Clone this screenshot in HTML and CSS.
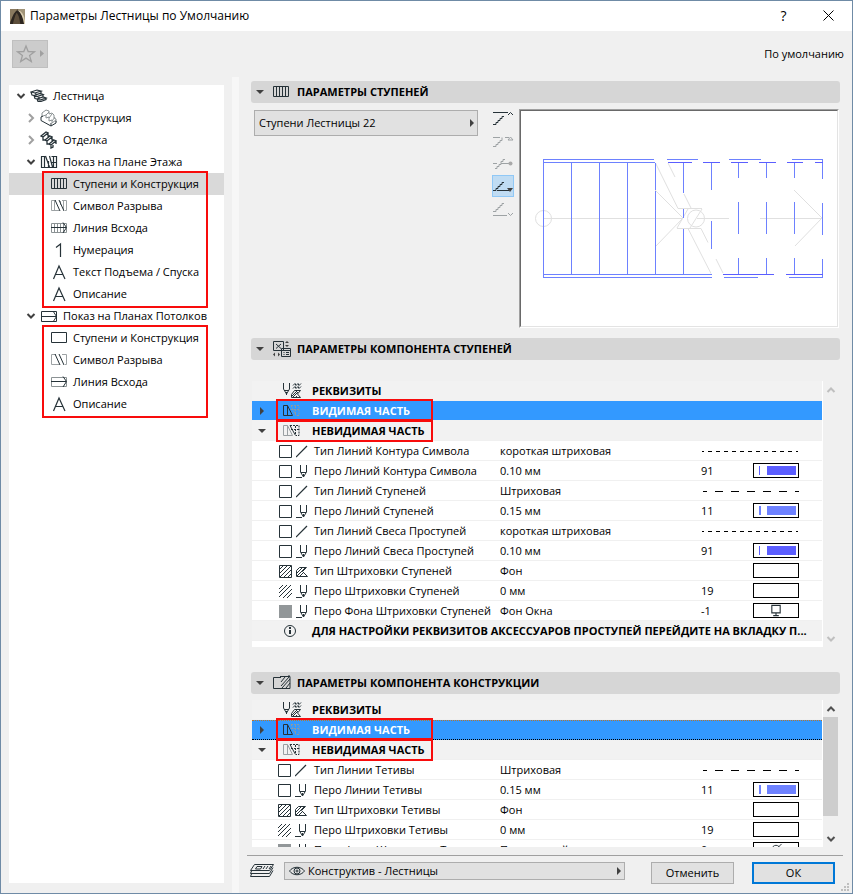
FILE: index.html
```html
<!DOCTYPE html>
<html lang="ru">
<head>
    <meta charset="UTF-8">
    <meta name="viewport" content="width=device-width, initial-scale=1.0">
    <title>Параметры Лестницы по Умолчанию</title>
    <link rel="stylesheet" href="styles.css">
</head>
<body>
    <!-- Icon set -->
    <svg class="sprite" aria-hidden="true">
        <symbol id="i-down" viewBox="0 0 10 10"><path d="M1.500 3L5 6.500 8.500 3" stroke-width="2"/></symbol>
        <symbol id="i-right" viewBox="0 0 10 10"><path d="M3 1l4 4-4 4" stroke-width="2"/></symbol>
        <symbol id="i-tri-down" viewBox="0 0 10 10"><path d="M1 3h8L5 7z" class="fill"/></symbol>
        <symbol id="i-tri-right" viewBox="0 0 10 10"><path d="M3 1v8l4-4z" class="fill"/></symbol>
        <symbol id="i-stair" viewBox="0 0 18 18">
            <path d="M1 5l6-2 4 1-6 2zM4 8.500l6-2 3 1-6 2zM7 12l6-2 3 1-6 2zM1 5l1 3 2 .5 1 3 2 .5 1 2.500h3l5-2V11M5 6l2 2M11 4v2.500M8 9.500l2 2M13 7.500V10" stroke-width="1.200"/>
        </symbol>
        <symbol id="i-structure" viewBox="0 0 18 18">
            <path d="M2 4l4-3 3 1v3l3-1 2 2v3l2 1v3M3 7l3-1v3l3-1v4l3-1v3l4-3M6 6l3-3M9 9l3-4M12 12l3-4M2 4v4" stroke="#8b9294"/>
            <path d="M1 8v3.500l10 5.500 5-3v-2M1 8l2-1M11 17v-3"/>
        </symbol>
        <symbol id="i-finish" viewBox="0 0 18 18">
            <path d="M1 5l5-4 2 1-5 4zM5 9l5-4 2 1-5 4zM9 13l5-4 2 1-5 4zM3 6v3l2 0M7 10v3l2 0M11 14v3l2-1v-2M8 2v3l2 0M12 6v3l2 0M16 10v3" stroke-width="1.300"/>
        </symbol>
        <symbol id="i-floor" viewBox="0 0 18 18">
            <path d="M1.500 3.500v11h15v-11h-5M1 3.500h4M4.500 3v11M8.500 8v6M13.500 3v11M5.500 3l4 11M9.500 3l3 11M11 9.500h5" stroke-width="1.200"/>
        </symbol>
        <symbol id="i-treads" viewBox="0 0 16 16"><path d="M.5 2.500h15v10H.5zM3.500 3v9M6.500 3v9M9.500 3v9M12.500 3v9"/></symbol>
        <symbol id="i-break" viewBox="0 0 16 16"><path d="M5 2.500H.5v10h8M3.500 3v9M12.500 3v9M11 2.500h4.500v10H14M9.500 3v4" stroke="#9da2a4"/><path d="M4 2l5 11M8 2l5 11"/></symbol>
        <symbol id="i-walk" viewBox="0 0 16 16"><path d="M.5 3.500h15v9H.5zM3.500 4v8M6.500 4v8M9.500 4v8M12.500 4v8" stroke="#8b9294"/><path d="M0 7.500h15M12 2.500l3.500 5L12 13"/></symbol>
        <symbol id="i-one" viewBox="0 0 16 16"><path d="M5 5.500l4.500-3.500v13" stroke-width="1.200"/></symbol>
        <symbol id="i-letter" viewBox="0 0 16 16"><path d="M2.500 15L8 2l6 13M4.500 10.500h7.500" stroke-width="1.200"/></symbol>
        <symbol id="i-ceiling" viewBox="0 0 18 18"><path d="M1.500 4.500h15v10h-15zM1 9.500h15M13 4l3.500 5.500L13 15"/></symbol>
        <symbol id="i-box" viewBox="0 0 16 16"><path d="M.5 2.500h15v10H.5z"/></symbol>
        <symbol id="i-break-box" viewBox="0 0 16 16"><path d="M5 2.500H.5v10h8M11 2.500h4.500v10H14" stroke="#9da2a4"/><path d="M4 2l5 11M8 2l5 11"/></symbol>
        <symbol id="i-walk-box" viewBox="0 0 16 16"><path d="M.5 3.500h15v9H.5z" stroke="#8b9294"/><path d="M0 7.500h15M12 2.500l3.500 5L12 13"/></symbol>
        <symbol id="i-component" viewBox="0 0 18 18">
            <path d="M.5 1.500h10v9H.5zM3 4l5 4.500M8 4L3 8.500M8.500 8.500h9v8h-9z"/>
            <path d="M9 10.500h8M10.500 12.500h1M13 12.500h3M10.500 14.500h1M13 14.500h3"/>
            <path d="M12 3l2-2 2 2zM12 5l2 2 2-2zM2 12.500v4L0 14.500zM5 12.500v4l2-2z" class="fill"/>
        </symbol>
        <symbol id="i-construct" viewBox="0 0 18 18">
            <path d="M8 3.500H.5v11H8M7 2.500h10v12H8M8 8l4-5M8 12l8-9M9 14l8-9M13 14l4-5M16 3v-2"/>
        </symbol>
        <symbol id="i-attributes" viewBox="0 0 20 16">
            <path d="M1.500 0v6L4.500 11l3-5V0M2 7.500h5M4.500 9v3M11 2.500l2-2 1 2 2-2 1 2 2-2M11 5.500l2-2 1 2 2-2 1 2 2-2"/>
            <path d="M9.500 14.500v-3l3-4h6l-3 3.500 3 3.500zM10 13l5-5M11 14l5-5M14 14l1-1"/>
        </symbol>
        <symbol id="i-visible" viewBox="0 0 20 16"><path d="M1.500 2.500v10h9L5.500 2.500zM5.500 2.500v10"/><path d="M9 2.500h8v10h-3L9 2.500M13.500 3v9M9 6.500h8" stroke="#8b9aa6" stroke-dasharray="2 1"/></symbol>
        <symbol id="i-hidden" viewBox="0 0 20 16"><path d="M1.500 2.500v10h9L5.500 2.500zM5.500 2.500v10" stroke="#9aa0a3"/><path d="M8 2.500l5.500 10"/><path d="M8 2.500h9v10h-3M13.500 3v9M9 6.500h8" stroke-dasharray="2 1"/></symbol>
        <symbol id="i-square" viewBox="0 0 14 14"><path d="M.5.5h12v12H.5z"/></symbol>
        <symbol id="i-hatch-box" viewBox="0 0 14 14"><path d="M.5.5h12v12H.5zM1 4l3-3M1 8l7-7M1 12L12 1M5 12l7-7M9 12l3-3"/></symbol>
        <symbol id="i-hatch" viewBox="0 0 14 14"><path d="M0 4l4-4M0 8l8-8M0 12L12 0M4 13l9-9M8 13l5-5"/></symbol>
        <symbol id="i-solid" viewBox="0 0 14 14"><path d="M0 0h13v13H0z" class="solid"/></symbol>
        <symbol id="i-line" viewBox="0 0 12 14"><path d="M0 12L11 1" stroke-width="1.200"/></symbol>
        <symbol id="i-pen" viewBox="0 0 12 14"><path d="M4.500 0v7l3 5 3-5V0M5 7.500h5M0 12.500h6M7.500 9v3"/></symbol>
        <symbol id="i-fill" viewBox="0 0 12 14"><path d="M.5 11.500v-6l3-3h7l-4 4 5 5zM1 8l5-5M1 11l8-8M4 11l3-3"/></symbol>
        <symbol id="i-screen" viewBox="0 0 14 14"><path d="M2.500 1.500h9v8h-9zM7 10v2M4 12.500h6" stroke-width="1.200"/></symbol>
        <symbol id="i-none" viewBox="0 0 14 14"><circle cx="7" cy="7" r="4.500"/><path d="M2 12L13 1"/></symbol>
        <symbol id="i-info" viewBox="0 0 20 16"><circle cx="8" cy="8" r="5.500"/><path d="M8 7v4M8 4v2" stroke-width="2"/></symbol>
        <symbol id="i-eye" viewBox="0 0 16 12"><path d="M.5 6C4 1 12 1 15.500 6 12 11 4 11 .5 6z"/><circle cx="8" cy="6" r="3"/><circle cx="8" cy="6" r="1"/></symbol>
        <symbol id="i-layers" viewBox="0 0 26 16">
            <path d="M5.500 1.500h19l-4 6H1.500zM24 4.500l-3.500 6H1.500l1-2.500M24 7.500l-3.500 6H1.500l1-2.500M8 3.500h5l-1.500 2.500H6.500zM14 6l2-3M17 6l2-3M20 6l2-3"/>
        </symbol>
    </svg>

    <header class="titlebar">
        <svg class="app-icon" viewBox="0 0 16 16">
            <path d="M0 0h16v16H0z" fill="#5d4e3b"/>
            <path d="M0 0h8L3 8 0 14z" fill="#8a7a5f"/>
            <path d="M0 16C3 6 5 2 9 1c3 2 5 8 6 15h-4C10 9 9 6 7 4 5 8 4 12 3 16z" fill="#2d2620"/>
            <path d="M8 0h8v12C14 7 12 3 8 0z" fill="#a09378"/>
            <path d="M8 1c5 1 7 6 8 11v4h-1C14 9 12 4 8 1z" fill="#d9cdb0"/>
        </svg>
        <h1>Параметры Лестницы по Умолчанию</h1>
        <button class="title-btn" aria-label="Справка">?</button>
        <button class="title-btn" aria-label="Закрыть">
            <svg width="11" height="11" viewBox="0 0 11 11"><path d="M.5.5l10 10M10.500.5l-10 10" stroke="#000"/></svg>
        </button>
    </header>

    <div class="toolbar">
        <button class="favorite" aria-label="Избранное" disabled>
            <svg width="30" height="20" viewBox="0 0 30 20">
                <path d="M10 2l2.200 5.500 6.300.3-4.900 3.800 1.700 5.900-5.300-3.400-5.300 3.400 1.700-5.900L1.500 7.800l6.300-.3z" stroke="#a0a0a0" stroke-width="1.300"/>
                <path d="M24 6v7l4-3.500z" fill="#a0a0a0"/>
            </svg>
        </button>
        <span>По умолчанию</span>
    </div>

    <div class="main">
        <nav class="tree">
            <a href="#" class="node"><svg class="chev"><use href="#i-down"/></svg><svg class="big"><use href="#i-stair"/></svg>Лестница</a>
            <a href="#" class="node child"><svg class="chev closed"><use href="#i-right"/></svg><svg class="big"><use href="#i-structure"/></svg>Конструкция</a>
            <a href="#" class="node child"><svg class="chev closed"><use href="#i-right"/></svg><svg class="big"><use href="#i-finish"/></svg>Отделка</a>
            <a href="#" class="node child"><svg class="chev"><use href="#i-down"/></svg><svg class="big"><use href="#i-floor"/></svg>Показ на Плане Этажа</a>
            <div class="branch">
                <a href="#" class="node leaf selected"><svg><use href="#i-treads"/></svg>Ступени и Конструкция</a>
                <a href="#" class="node leaf"><svg><use href="#i-break"/></svg>Символ Разрыва</a>
                <a href="#" class="node leaf"><svg><use href="#i-walk"/></svg>Линия Всхода</a>
                <a href="#" class="node leaf"><svg><use href="#i-one"/></svg>Нумерация</a>
                <a href="#" class="node leaf"><svg><use href="#i-letter"/></svg>Текст Подъема / Спуска</a>
                <a href="#" class="node leaf"><svg><use href="#i-letter"/></svg>Описание</a>
            </div>
            <a href="#" class="node child"><svg class="chev"><use href="#i-down"/></svg><svg class="big"><use href="#i-ceiling"/></svg>Показ на Планах Потолков</a>
            <div class="branch">
                <a href="#" class="node leaf"><svg><use href="#i-box"/></svg>Ступени и Конструкция</a>
                <a href="#" class="node leaf"><svg><use href="#i-break-box"/></svg>Символ Разрыва</a>
                <a href="#" class="node leaf"><svg><use href="#i-walk-box"/></svg>Линия Всхода</a>
                <a href="#" class="node leaf"><svg><use href="#i-letter"/></svg>Описание</a>
            </div>
        </nav>
        <div class="splitter"></div>

        <div class="content">
            <section class="treads">
                <h2><svg class="tri"><use href="#i-tri-down"/></svg><svg class="h-icon small"><use href="#i-treads"/></svg>ПАРАМЕТРЫ СТУПЕНЕЙ</h2>
                <div class="treads-body">
                    <button class="popup">Ступени Лестницы 22<svg class="tri"><use href="#i-tri-right"/></svg></button>
                    <div class="levels">
                        <button aria-label="Показ выше"><svg viewBox="0 0 22 20"><path d="M1 2.500h15M1 14.500h3v-2h2v-2h2v-2h2v-2h2M16 5l2.500-2.500L21 5"/></svg></button>
                        <button class="off" aria-label="На этаж выше"><svg viewBox="0 0 22 20"><path d="M1 5.500h7M13 5.500h4M1 14.500h3v-2h2v-2h2v-2h2v-3M16 8l2.500-3L21 8z"/></svg></button>
                        <button class="off" aria-label="Собственный этаж"><svg viewBox="0 0 22 20"><path d="M1 9.500h4M9 9.500h8M3 14.500h2v-2h2v-2h2v-3h2v-2h2"/><circle cx="18.500" cy="9.500" r="2" class="fill"/></svg></button>
                        <button class="on" aria-label="На этаж ниже"><svg viewBox="0 0 22 20"><path d="M1 14.500h3v-2h2v-2h2v-2h2v-2h2M5 14.500h12"/><path d="M15 12h6l-3 4z" class="fill"/></svg></button>
                        <button class="off" aria-label="Показ ниже"><svg viewBox="0 0 22 20"><path d="M1 13.500h3v-2h2v-2h2v-2h2v-2h2M1 17.500h14M16 15l2.500 2.500L21 15"/></svg></button>
                    </div>
                    <div class="preview">
                        <svg viewBox="521 111 316 215">
                            <g stroke="#e0e0e0">
                                <circle cx="543.500" cy="218.500" r="8"/>
                                <circle cx="696" cy="218.500" r="8.500"/>
                                <path d="M543 218.500h140M697 218.500h32M760 218.500h62"/>
                                <path d="M655 190l28 28-27 28M794 190l28 28-27 28"/>
                                <path d="M655.500 163l22.500 45.500h24M668 163l7 14M684 194l7 14M677 228.500h24l7 14M688 228.500l23 45M716 259l7 14M677 228l11-19M690 228l12-19"/>
                            </g>
                            <g stroke="#6d81ff">
                                <path d="M543.500 159v119M543 159.500h111M543 162.500h112M571.500 163v111M599.500 163v111M627.500 163v111M655.500 163v27M655.500 191v83"/>
                                <path d="M683.500 163v30M683.500 209v9M683.500 229v45M711.500 163v27M711.500 221v28"/>
                                <path d="M738.500 163v15M738.500 202v32M738.500 258v16M766.500 163v15M766.500 202v32M766.500 258v16M794.500 163v15M794.500 202v32M794.500 258v16M822.500 159v20M822.500 203v32M822.500 259v19"/>
                                <path d="M667 159.500h31M729 159.500h32M792 159.500h31M543 274.500h169M543 277.500h169M724 277.500h34M789 277.500h34"/>
                            </g>
                            <path stroke="#5b5eff" d="M668 162.500h24M703 162.500h17M731 162.500h17M759 162.500h17M787 162.500h16M815 162.500h8M723 274.500h51M786 274.500h37"/>
                        </svg>
                    </div>
                </div>
            </section>

            <section class="component">
                <h2><svg class="tri"><use href="#i-tri-down"/></svg><svg class="h-icon"><use href="#i-component"/></svg>ПАРАМЕТРЫ КОМПОНЕНТА СТУПЕНЕЙ</h2>
                <div class="list">
                    <div class="rows">
                        <table>
                            <colgroup><col class="c-arrow"><col class="c-icons"><col class="c-name"><col><col class="c-num"><col class="c-swatch"></colgroup>
                            <tr class="group"><td></td><td colspan="5"><span class="label"><svg><use href="#i-attributes"/></svg>РЕКВИЗИТЫ</span></td></tr>
                            <tr class="group current"><td><svg class="tri"><use href="#i-tri-right"/></svg></td><td colspan="5"><span class="label marked"><svg><use href="#i-visible"/></svg>ВИДИМАЯ ЧАСТЬ</span></td></tr>
                            <tr class="group"><td><svg class="tri"><use href="#i-tri-down"/></svg></td><td colspan="5"><span class="label marked"><svg><use href="#i-hidden"/></svg>НЕВИДИМАЯ ЧАСТЬ</span></td></tr>
                            <tr><td></td><td><svg class="a"><use href="#i-square"/></svg><svg class="b"><use href="#i-line"/></svg></td><td>Тип Линий Контура Символа</td><td>короткая штриховая</td><td colspan="2"><svg class="dash"><path d="M1 8.500h96" class="short"/></svg></td></tr>
                            <tr><td></td><td><svg class="a"><use href="#i-square"/></svg><svg class="b"><use href="#i-pen"/></svg></td><td>Перо Линий Контура Символа</td><td>0.10 мм</td><td>91</td><td><button class="swatch pen91" aria-label="Перо 91"></button></td></tr>
                            <tr><td></td><td><svg class="a"><use href="#i-square"/></svg><svg class="b"><use href="#i-line"/></svg></td><td>Тип Линий Ступеней</td><td>Штриховая</td><td colspan="2"><svg class="dash"><path d="M2 8.500h96" class="long"/></svg></td></tr>
                            <tr><td></td><td><svg class="a"><use href="#i-square"/></svg><svg class="b"><use href="#i-pen"/></svg></td><td>Перо Линий Ступеней</td><td>0.15 мм</td><td>11</td><td><button class="swatch pen11" aria-label="Перо 11"></button></td></tr>
                            <tr><td></td><td><svg class="a"><use href="#i-square"/></svg><svg class="b"><use href="#i-line"/></svg></td><td>Тип Линий Свеса Проступей</td><td>короткая штриховая</td><td colspan="2"><svg class="dash"><path d="M1 8.500h96" class="short"/></svg></td></tr>
                            <tr><td></td><td><svg class="a"><use href="#i-square"/></svg><svg class="b"><use href="#i-pen"/></svg></td><td>Перо Линий Свеса Проступей</td><td>0.10 мм</td><td>91</td><td><button class="swatch pen91" aria-label="Перо 91"></button></td></tr>
                            <tr><td></td><td><svg class="a"><use href="#i-hatch-box"/></svg><svg class="b"><use href="#i-fill"/></svg></td><td>Тип Штриховки Ступеней</td><td>Фон</td><td></td><td><button class="swatch" aria-label="Штриховка"></button></td></tr>
                            <tr><td></td><td><svg class="a"><use href="#i-hatch"/></svg><svg class="b"><use href="#i-pen"/></svg></td><td>Перо Штриховки Ступеней</td><td>0 мм</td><td>19</td><td><button class="swatch" aria-label="Перо 19"></button></td></tr>
                            <tr><td></td><td><svg class="a"><use href="#i-solid"/></svg><svg class="b"><use href="#i-pen"/></svg></td><td>Перо Фона Штриховки Ступеней</td><td>Фон Окна</td><td>-1</td><td><button class="swatch" aria-label="Перо фона"><svg><use href="#i-screen"/></svg></button></td></tr>
                            <tr class="group"><td></td><td colspan="5"><span class="label"><svg><use href="#i-info"/></svg>ДЛЯ НАСТРОЙКИ РЕКВИЗИТОВ АКСЕССУАРОВ ПРОСТУПЕЙ ПЕРЕЙДИТЕ НА ВКЛАДКУ П...</span></td></tr>
                        </table>
                    </div>
                    <div class="scroll idle">
                        <button aria-label="Вверх"><svg viewBox="0 0 10 10"><path d="M1.500 7L5 3.500 8.500 7" stroke-width="2"/></svg></button>
                        <button aria-label="Вниз"><svg viewBox="0 0 10 10"><path d="M1.500 3L5 6.500 8.500 3" stroke-width="2"/></svg></button>
                    </div>
                </div>
            </section>

            <section class="structure">
                <h2><svg class="tri"><use href="#i-tri-down"/></svg><svg class="h-icon"><use href="#i-construct"/></svg>ПАРАМЕТРЫ КОМПОНЕНТА КОНСТРУКЦИИ</h2>
                <div class="list">
                    <div class="rows">
                        <table>
                            <colgroup><col class="c-arrow"><col class="c-icons"><col class="c-name"><col><col class="c-num"><col class="c-swatch"></colgroup>
                            <tr class="group"><td></td><td colspan="5"><span class="label"><svg><use href="#i-attributes"/></svg>РЕКВИЗИТЫ</span></td></tr>
                            <tr class="group current focused"><td><svg class="tri"><use href="#i-tri-right"/></svg></td><td colspan="5"><span class="label marked"><svg><use href="#i-visible"/></svg>ВИДИМАЯ ЧАСТЬ</span></td></tr>
                            <tr class="group"><td><svg class="tri"><use href="#i-tri-down"/></svg></td><td colspan="5"><span class="label marked"><svg><use href="#i-hidden"/></svg>НЕВИДИМАЯ ЧАСТЬ</span></td></tr>
                            <tr><td></td><td><svg class="a"><use href="#i-square"/></svg><svg class="b"><use href="#i-line"/></svg></td><td>Тип Линии Тетивы</td><td>Штриховая</td><td colspan="2"><svg class="dash"><path d="M2 8.500h96" class="long"/></svg></td></tr>
                            <tr><td></td><td><svg class="a"><use href="#i-square"/></svg><svg class="b"><use href="#i-pen"/></svg></td><td>Перо Линии Тетивы</td><td>0.15 мм</td><td>11</td><td><button class="swatch pen11" aria-label="Перо 11"></button></td></tr>
                            <tr><td></td><td><svg class="a"><use href="#i-hatch-box"/></svg><svg class="b"><use href="#i-fill"/></svg></td><td>Тип Штриховки Тетивы</td><td>Фон</td><td></td><td><button class="swatch" aria-label="Штриховка"></button></td></tr>
                            <tr><td></td><td><svg class="a"><use href="#i-hatch"/></svg><svg class="b"><use href="#i-pen"/></svg></td><td>Перо Штриховки Тетивы</td><td>0 мм</td><td>19</td><td><button class="swatch" aria-label="Перо 19"></button></td></tr>
                            <tr><td></td><td><svg class="a"><use href="#i-solid"/></svg><svg class="b"><use href="#i-pen"/></svg></td><td>Перо Фона Штриховки Тетивы</td><td>Прозрачный</td><td>0</td><td><button class="swatch" aria-label="Перо фона"><svg><use href="#i-none"/></svg></button></td></tr>
                        </table>
                    </div>
                    <div class="scroll">
                        <button aria-label="Вверх"><svg viewBox="0 0 10 10"><path d="M1.500 7L5 3.500 8.500 7" stroke-width="2"/></svg></button>
                        <div class="thumb"></div>
                        <button aria-label="Вниз"><svg viewBox="0 0 10 10"><path d="M1.500 3L5 6.500 8.500 3" stroke-width="2"/></svg></button>
                    </div>
                </div>
            </section>

            <footer>
                <svg class="layers"><use href="#i-layers"/></svg>
                <button class="popup layer"><svg class="eye"><use href="#i-eye"/></svg>Конструктив - Лестницы<svg class="tri"><use href="#i-tri-right"/></svg></button>
                <button class="btn">Отменить</button>
                <button class="btn primary">ОК</button>
            </footer>
        </div>
    </div>
    <svg class="grip" viewBox="0 0 8 8"><path d="M6 0h2v2H6zM3 3h2v2H3zM6 3h2v2H6zM0 6h2v2H0zM3 6h2v2H3zM6 6h2v2H6z" fill="#bfbfbf"/></svg>
</body>
</html>
```
FILE: styles.css
```css
*,
*::after {
    box-sizing: border-box;
}

body {
    position: relative;
    display: flex;
    flex-direction: column;
    height: 100vh;
    margin: 0;
    border: 1px solid #6f8ba6;
    background: #f0f0f0;
    color: #000;
    font: 11px/16px "Open Sans", "Noto Sans", sans-serif;
}

button {
    padding: 0;
    border: 0;
    background: none;
    color: inherit;
    font: inherit;
}

svg {
    flex: none;
    fill: none;
    stroke: #263238;
}

.sprite {
    display: none;
}

.fill {
    fill: #404040;
    stroke: none;
}

.solid {
    fill: #929799;
    stroke: none;
}

.tri {
    width: 10px;
    height: 10px;
}

/* Title bar */
.titlebar {
    display: flex;
    align-items: center;
    height: 30px;
    padding: 0 1px 0 9px;
    background: #fff;
}

.titlebar h1 {
    flex: 1;
    margin: 0 0 0 5px;
    font-size: 12px;
    font-weight: normal;
}

.app-icon {
    width: 15px;
    height: 15px;
    stroke: none;
}

.title-btn {
    width: 45px;
    height: 30px;
    font-size: 14px;
}

.toolbar {
    display: flex;
    justify-content: space-between;
    align-items: center;
    height: 46px;
    padding: 0 8px 0 11px;
}

.favorite {
    width: 36px;
    height: 28px;
    border: 1px solid #bfbfbf;
    background: #cccccc;
}

.favorite svg {
    display: block;
    margin-left: 3px;
    stroke: none;
}

/* Settings tree */
.main {
    flex: 1;
    display: flex;
    min-height: 0;
}

.tree {
    width: 215px;
    margin: 8px 8px 10px;
    background: #fff;
}

.node {
    display: flex;
    align-items: center;
    height: 22px;
    padding-left: 7px;
    color: #000;
    text-decoration: none;
    white-space: nowrap;
}

.node.child {
    padding-left: 17px;
}

.node.leaf {
    padding-left: 42px;
}

.node.selected {
    background: #d9d9d9;
}

.node svg {
    width: 16px;
    height: 16px;
    margin-right: 6px;
}

.node .chev {
    width: 10px;
    height: 10px;
    margin-right: 4px;
    stroke: #404040;
}

.node .chev.closed {
    stroke: #a0a0a0;
}

.node .big {
    width: 18px;
    height: 18px;
    margin-right: 5px;
}

.branch {
    position: relative;
}

.branch::after {
    content: "";
    position: absolute;
    top: -2px;
    bottom: -3px;
    left: 33px;
    width: 166px;
    border: 2px solid #f80c0c;
}

.splitter {
    width: 7px;
    background: #f7f7f7;
}

/* Panels */
.content {
    flex: 1;
    display: flex;
    flex-direction: column;
    min-width: 0;
    padding: 4px 9px 9px 8px;
}

section {
    margin: 0 3px 0 4px;
}

h2 {
    display: flex;
    align-items: center;
    height: 22px;
    margin: 0;
    padding-left: 4px;
    border-radius: 3px;
    background: #d6d6d6;
    font-size: 11px;
    font-weight: bold;
}

.h-icon {
    width: 18px;
    height: 18px;
    margin: 0 6px 0 8px;
}

.h-icon.small {
    width: 16px;
    height: 16px;
    margin-right: 8px;
}

.treads-body {
    display: flex;
    align-items: flex-start;
    padding: 6px 1px 0 3px;
}

.popup {
    display: flex;
    justify-content: space-between;
    align-items: center;
    width: 224px;
    height: 26px;
    margin: 1px 14px 0 0;
    padding: 0 0 0 4px;
    border: 1px solid #adadad;
    background: #e1e1e1;
}

.levels {
    display: flex;
    flex-direction: column;
    margin-right: 5px;
}

.levels button {
    width: 22px;
    height: 22px;
    border: 1px solid transparent;
}

.levels svg {
    display: block;
    width: 22px;
    height: 20px;
    margin-left: -1px;
}

.levels .off {
    opacity: 0.4;
}

.levels .on {
    border-color: #90c8f6;
    background: #c0dcf3;
}

.preview {
    flex: 1;
    border: 1px solid;
    border-color: #a0a0a0 #fff #fff #a0a0a0;
}

.preview svg {
    display: block;
    width: 100%;
    height: 217px;
    border: 1px solid;
    border-color: #696969 #e3e3e3 #e3e3e3 #696969;
    background: #fff;
}

.component {
    margin-top: 10px;
}

.component .list {
    height: 266px;
    margin-top: 21px;
}

.component .a {
    margin-left: 1px;
}

.structure {
    flex: 1;
    display: flex;
    flex-direction: column;
    min-height: 0;
    margin-top: 25px;
}

.structure .list {
    flex: 1;
    min-height: 0;
    margin-top: 6px;
}

/* Attribute lists */
.list {
    display: flex;
    padding: 0 2px 0 1px;
}

.rows {
    flex: 1;
    min-width: 0;
    overflow: hidden;
    border-right: 1px solid #fff;
    background: #fff;
}

table {
    width: 100%;
    table-layout: fixed;
    border-spacing: 0;
}

.c-arrow {
    width: 26px;
}

.c-icons {
    width: 36px;
}

.c-name {
    width: 186px;
}

.c-num {
    width: 52px;
}

.c-swatch {
    width: 69px;
}

td {
    height: 20px;
    padding: 0;
    border-bottom: 1px solid #f0f0f0;
    white-space: nowrap;
    vertical-align: middle;
}

td svg {
    display: inline-block;
    vertical-align: middle;
}

td .tri {
    display: block;
    margin-left: 5px;
}

.group td {
    background: #f2f2f2;
    font-weight: bold;
}

.group.current td {
    border-bottom-color: #f2f2f2;
    background: #3399ff;
    color: #fff;
}

.group.focused td {
    border-top: 1px dotted #b8752c;
    border-bottom: 1px dotted #000;
}

.label {
    position: relative;
    display: flex;
    align-items: center;
    height: 18px;
}

.label svg {
    width: 20px;
    height: 16px;
    margin: 0 10px 0 4px;
}

.marked::after {
    content: "";
    position: absolute;
    top: -3px;
    left: -2px;
    z-index: 1;
    width: 157px;
    height: 23px;
    border: 2px solid #f80c0c;
}

.a {
    width: 14px;
    height: 14px;
    margin-right: 3px;
}

.b {
    width: 12px;
    height: 14px;
}

.dash {
    width: 98px;
    height: 16px;
    stroke: #000;
}

.short {
    stroke-dasharray: 4 4;
    stroke-dashoffset: 2;
}

.long {
    stroke-dasharray: 8 8;
    stroke-dashoffset: 4;
}

.swatch {
    display: block;
    width: 46px;
    height: 15px;
    border: 1px solid #000;
    background: #fff;
}

.swatch svg {
    display: block;
    width: 14px;
    height: 13px;
    margin: 0 auto;
}

.pen91,
.pen11 {
    padding: 2px;
    background-clip: content-box;
}

.pen91 {
    background-image: linear-gradient(90deg, #fff 5px, #5b5eff 5px 6px, #fff 6px 13px, #5b5eff 13px);
}

.pen11 {
    background-image: linear-gradient(90deg, #fff 5px, #6d81ff 5px 7px, #fff 7px 13px, #6d81ff 13px);
}

.scroll {
    display: flex;
    flex-direction: column;
    justify-content: space-between;
    width: 15px;
}

.scroll button {
    height: 17px;
}

.scroll button svg {
    display: block;
    width: 10px;
    height: 10px;
    margin: 0 auto;
    stroke: #505050;
}

.scroll.idle button svg {
    stroke: #bfbfbf;
}

.thumb {
    height: 99px;
    margin-bottom: auto;
    background: #cdcdcd;
}

/* Bottom bar */
footer {
    display: flex;
    align-items: flex-start;
    margin-top: 8px;
    padding: 6px 8px 0 2px;
    border-top: 1px solid #a0a0a0;
}

.layers {
    width: 26px;
    height: 16px;
    margin: 1px 9px 0 0;
}

.layer {
    flex: 1;
    height: 18px;
    margin: 0;
}

.layer .tri {
    margin-left: auto;
}

.eye {
    width: 16px;
    height: 12px;
    margin-right: 3px;
}

.btn {
    width: 83px;
    height: 22px;
    margin-left: 26px;
    border: 1px solid #adadad;
    background: #e1e1e1;
}

.btn.primary {
    margin-left: 18px;
    border: 2px solid #0078d7;
}

.grip {
    position: absolute;
    right: 3px;
    bottom: 2px;
    width: 8px;
    height: 8px;
    stroke: none;
}
```
